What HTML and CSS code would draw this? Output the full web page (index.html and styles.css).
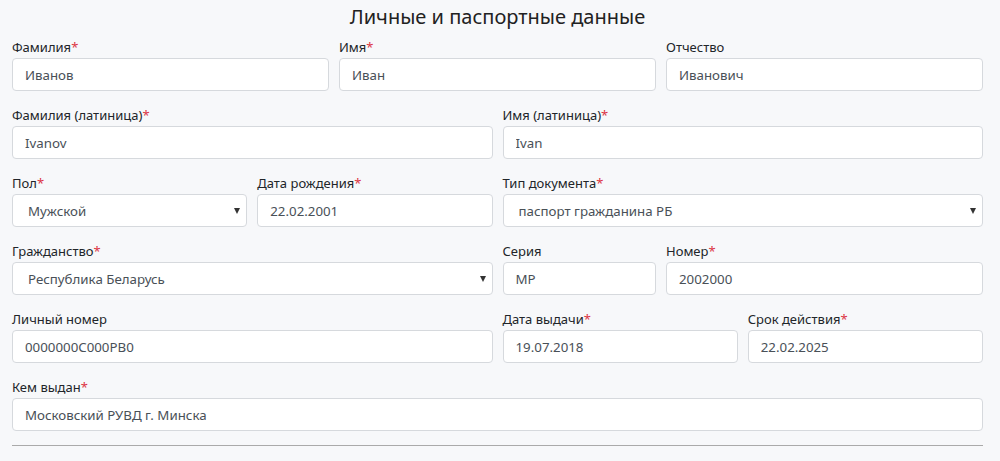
FILE: index.html
```html
<!DOCTYPE html>
<html lang="ru">

<head>
    <meta charset="UTF-8">
    <meta name="viewport" content="width=device-width, initial-scale=1.0">
    <title>Личные и паспортные данные</title>
    <link rel="stylesheet" href="styles.css">
</head>

<body>
    <div class="container">
        <h2>Личные и паспортные данные</h2>

        <form class="form-grid">
            <!-- ФИО -->
            <div class="field span-4">
                <label>Фамилия<span class="req">*</span></label>
                <input type="text" value="Иванов">
            </div>
            <div class="field span-4">
                <label>Имя<span class="req">*</span></label>
                <input type="text" value="Иван">
            </div>
            <div class="field span-4">
                <label>Отчество</label>
                <input type="text" value="Иванович">
            </div>

            <!-- Латиница -->
            <div class="field span-6">
                <label>Фамилия (латиница)<span class="req">*</span></label>
                <input type="text" value="Ivanov">
            </div>
            <div class="field span-6">
                <label>Имя (латиница)<span class="req">*</span></label>
                <input type="text" value="Ivan">
            </div>

            <!-- Пол, дата, документ -->
            <div class="field span-3">
                <label>Пол<span class="req">*</span></label>
                <div class="select-wrap">
                    <select>
                        <option>Мужской</option>
                        <option>Женский</option>
                    </select>
                </div>
            </div>
            <div class="field span-3">
                <label>Дата рождения<span class="req">*</span></label>
                <input type="text" value="22.02.2001">
            </div>
            <div class="field span-6">
                <label>Тип документа<span class="req">*</span></label>
                <div class="select-wrap">
                    <select>
                        <option>паспорт гражданина РБ</option>
                        <option>вид на жительство</option>
                    </select>
                </div>
            </div>

            <!-- Гражданство, серия, номер -->
            <div class="field span-6">
                <label>Гражданство<span class="req">*</span></label>
                <div class="select-wrap">
                    <select>
                        <option>Республика Беларусь</option>
                        <option>Российская Федерация</option>
                    </select>
                </div>
            </div>
            <div class="field span-2">
                <label>Серия</label>
                <input type="text" value="MP">
            </div>
            <div class="field span-4">
                <label>Номер<span class="req">*</span></label>
                <input type="text" value="2002000">
            </div>

            <!-- Личный номер, даты -->
            <div class="field span-6">
                <label>Личный номер</label>
                <input type="text" value="0000000C000PB0">
            </div>
            <div class="field span-3">
                <label>Дата выдачи<span class="req">*</span></label>
                <input type="text" value="19.07.2018">
            </div>
            <div class="field span-3">
                <label>Срок действия<span class="req">*</span></label>
                <input type="text" value="22.02.2025">
            </div>

            <div class="field span-12">
                <label>Кем выдан<span class="req">*</span></label>
                <input type="text" value="Московский РУВД г. Минска">
            </div>
        </form>

        <hr>
    </div>
</body>

</html>
```

FILE: styles.css
```css
* {
    margin: 0;
    padding: 0;
    box-sizing: border-box;
}

body {
    font-family: "Noto Sans", "Open Sans", sans-serif;
    background-color: #f7f8fa;
    color: #212529;
}

.container {
    width: 971px;
    margin-left: 12px;
}

h2 {
    text-align: center;
    font-size: 20px;
    font-weight: 400;
    line-height: 24px;
    padding-top: 5px;
    margin-bottom: 8px;
    color: #222;
}

.form-grid {
    display: grid;
    grid-template-columns: repeat(12, 1fr);
    column-gap: 10px;
    row-gap: 14px;
}

.span-2 { grid-column: span 2; }
.span-3 { grid-column: span 3; }
.span-4 { grid-column: span 4; }
.span-6 { grid-column: span 6; }
.span-12 { grid-column: span 12; }

.field label {
    display: block;
    font-size: 13px;
    line-height: 20px;
    margin-bottom: 1px;
}

.req {
    color: #dc3545;
}

input,
select {
    display: block;
    width: 100%;
    height: 33px;
    padding: 5px 12px;
    font-family: inherit;
    font-size: 13.3px;
    color: #495057;
    background-color: #fff;
    border: 1px solid #d6d9dd;
    border-radius: 4px;
    outline: none;
}

select {
    appearance: none;
    -webkit-appearance: none;
    padding-left: 15px;
    padding-right: 28px;
}

.select-wrap {
    position: relative;
}

.select-wrap::after {
    content: "";
    position: absolute;
    right: 7px;
    top: 14px;
    border-left: 3.5px solid transparent;
    border-right: 3.5px solid transparent;
    border-top: 6px solid #333;
    pointer-events: none;
}

hr {
    border: 0;
    border-top: 1px solid #aaa;
    margin-top: 14px;
}
```
